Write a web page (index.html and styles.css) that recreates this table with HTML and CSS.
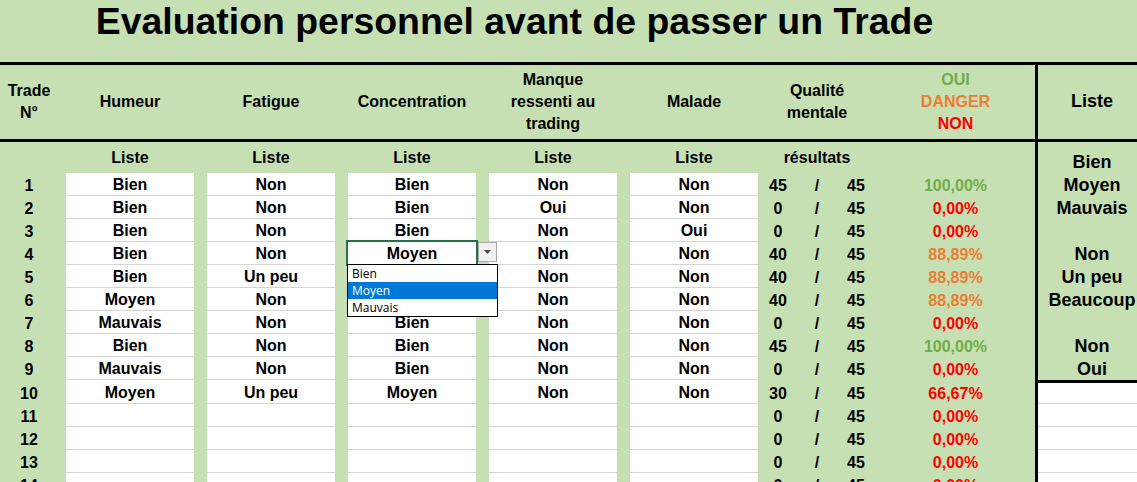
FILE: index.html
```html
<!DOCTYPE html>
<html lang="fr">
<head>
<meta charset="utf-8">
<title>Evaluation personnel avant de passer un Trade</title>
<link rel="stylesheet" href="styles.css">
</head>
<body>
<div class="sheet">
  <div class="title-row"><h1 class="title">Evaluation personnel avant de passer un Trade</h1></div>
  <div class="hline"></div>

  <div class="row head">
    <div class="h c-no"><span>Trade<br>N°</span></div>
    <div class="inputs">
      <div class="h c-in"><span>Humeur</span></div>
      <div class="h c-in"><span>Fatigue</span></div>
      <div class="h c-in"><span>Concentration</span></div>
      <div class="h c-in"><span>Manque<br>ressenti au<br>trading</span></div>
      <div class="h c-in"><span>Malade</span></div>
    </div>
    <div class="h c-qual"><span>Qualité<br>mentale</span></div>
    <div class="h c-pct"><span><span class="g">OUI</span><br><span class="o">DANGER</span><br><span class="r">NON</span></span></div>
    <div class="vsep"></div>
    <div class="h c-list big"><span>Liste</span></div>
  </div>
  <div class="hline"></div>

  <div class="row liste">
    <div class="cell c-no"></div>
    <div class="inputs">
      <div class="cell lab">Liste</div>
      <div class="cell lab">Liste</div>
      <div class="cell lab">Liste</div>
      <div class="cell lab">Liste</div>
      <div class="cell lab">Liste</div>
    </div>
    <div class="cell c-qual">résultats</div>
    <div class="cell c-pct"></div>
    <div class="vsep"></div>
    <div class="cell c-list big">Bien</div>
  </div>

  <div class="row drow">
    <div class="cell c-no">1</div>
    <div class="inputs">
      <div class="cell c-in">Bien</div><div class="cell c-in">Non</div><div class="cell c-in">Bien</div><div class="cell c-in">Non</div><div class="cell c-in">Non</div>
    </div>
    <div class="cell c-n1">45</div><div class="cell c-sl">/</div><div class="cell c-n2">45</div>
    <div class="cell c-pct g">100,00%</div>
    <div class="vsep"></div>
    <div class="cell c-list big">Moyen</div>
  </div>

  <div class="row drow">
    <div class="cell c-no">2</div>
    <div class="inputs">
      <div class="cell c-in">Bien</div><div class="cell c-in">Non</div><div class="cell c-in">Bien</div><div class="cell c-in">Oui</div><div class="cell c-in">Non</div>
    </div>
    <div class="cell c-n1">0</div><div class="cell c-sl">/</div><div class="cell c-n2">45</div>
    <div class="cell c-pct r">0,00%</div>
    <div class="vsep"></div>
    <div class="cell c-list big">Mauvais</div>
  </div>

  <div class="row drow">
    <div class="cell c-no">3</div>
    <div class="inputs">
      <div class="cell c-in">Bien</div><div class="cell c-in">Non</div><div class="cell c-in">Bien</div><div class="cell c-in">Non</div><div class="cell c-in">Oui</div>
    </div>
    <div class="cell c-n1">0</div><div class="cell c-sl">/</div><div class="cell c-n2">45</div>
    <div class="cell c-pct r">0,00%</div>
    <div class="vsep"></div>
    <div class="cell c-list big"></div>
  </div>

  <div class="row drow">
    <div class="cell c-no">4</div>
    <div class="inputs">
      <div class="cell c-in">Bien</div><div class="cell c-in">Non</div>
      <div class="cell c-in active">Moyen
        <div class="sel"></div>
        <div class="dd-btn"><svg width="7" height="4" viewBox="0 0 7 4"><polygon points="0,0 7,0 3.5,4" fill="#4a4a4a"/></svg></div>
        <div class="dd-list">
          <div class="dd-item">Bien</div>
          <div class="dd-item hl">Moyen</div>
          <div class="dd-item">Mauvais</div>
        </div>
      </div>
      <div class="cell c-in">Non</div><div class="cell c-in">Non</div>
    </div>
    <div class="cell c-n1">40</div><div class="cell c-sl">/</div><div class="cell c-n2">45</div>
    <div class="cell c-pct o">88,89%</div>
    <div class="vsep"></div>
    <div class="cell c-list big">Non</div>
  </div>

  <div class="row drow">
    <div class="cell c-no">5</div>
    <div class="inputs">
      <div class="cell c-in">Bien</div><div class="cell c-in">Un peu</div><div class="cell c-in">Bien</div><div class="cell c-in">Non</div><div class="cell c-in">Non</div>
    </div>
    <div class="cell c-n1">40</div><div class="cell c-sl">/</div><div class="cell c-n2">45</div>
    <div class="cell c-pct o">88,89%</div>
    <div class="vsep"></div>
    <div class="cell c-list big">Un peu</div>
  </div>

  <div class="row drow">
    <div class="cell c-no">6</div>
    <div class="inputs">
      <div class="cell c-in">Moyen</div><div class="cell c-in">Non</div><div class="cell c-in">Bien</div><div class="cell c-in">Non</div><div class="cell c-in">Non</div>
    </div>
    <div class="cell c-n1">40</div><div class="cell c-sl">/</div><div class="cell c-n2">45</div>
    <div class="cell c-pct o">88,89%</div>
    <div class="vsep"></div>
    <div class="cell c-list big">Beaucoup</div>
  </div>

  <div class="row drow">
    <div class="cell c-no">7</div>
    <div class="inputs">
      <div class="cell c-in">Mauvais</div><div class="cell c-in">Non</div><div class="cell c-in">Bien</div><div class="cell c-in">Non</div><div class="cell c-in">Non</div>
    </div>
    <div class="cell c-n1">0</div><div class="cell c-sl">/</div><div class="cell c-n2">45</div>
    <div class="cell c-pct r">0,00%</div>
    <div class="vsep"></div>
    <div class="cell c-list big"></div>
  </div>

  <div class="row drow">
    <div class="cell c-no">8</div>
    <div class="inputs">
      <div class="cell c-in">Bien</div><div class="cell c-in">Non</div><div class="cell c-in">Bien</div><div class="cell c-in">Non</div><div class="cell c-in">Non</div>
    </div>
    <div class="cell c-n1">45</div><div class="cell c-sl">/</div><div class="cell c-n2">45</div>
    <div class="cell c-pct g">100,00%</div>
    <div class="vsep"></div>
    <div class="cell c-list big">Non</div>
  </div>

  <div class="row drow">
    <div class="cell c-no">9</div>
    <div class="inputs">
      <div class="cell c-in">Mauvais</div><div class="cell c-in">Non</div><div class="cell c-in">Bien</div><div class="cell c-in">Non</div><div class="cell c-in">Non</div>
    </div>
    <div class="cell c-n1">0</div><div class="cell c-sl">/</div><div class="cell c-n2">45</div>
    <div class="cell c-pct r">0,00%</div>
    <div class="vsep"></div>
    <div class="cell c-list big">Oui</div>
  </div>

  <div class="row drow tall">
    <div class="cell c-no">10</div>
    <div class="inputs">
      <div class="cell c-in">Moyen</div><div class="cell c-in">Un peu</div><div class="cell c-in">Moyen</div><div class="cell c-in">Non</div><div class="cell c-in">Non</div>
    </div>
    <div class="cell c-n1">30</div><div class="cell c-sl">/</div><div class="cell c-n2">45</div>
    <div class="cell c-pct r">66,67%</div>
    <div class="vsep"></div>
    <div class="cell c-list blank first"></div>
  </div>

  <div class="row drow">
    <div class="cell c-no">11</div>
    <div class="inputs">
      <div class="cell c-in"></div><div class="cell c-in"></div><div class="cell c-in"></div><div class="cell c-in"></div><div class="cell c-in"></div>
    </div>
    <div class="cell c-n1">0</div><div class="cell c-sl">/</div><div class="cell c-n2">45</div>
    <div class="cell c-pct r">0,00%</div>
    <div class="vsep"></div>
    <div class="cell c-list blank"></div>
  </div>

  <div class="row drow">
    <div class="cell c-no">12</div>
    <div class="inputs">
      <div class="cell c-in"></div><div class="cell c-in"></div><div class="cell c-in"></div><div class="cell c-in"></div><div class="cell c-in"></div>
    </div>
    <div class="cell c-n1">0</div><div class="cell c-sl">/</div><div class="cell c-n2">45</div>
    <div class="cell c-pct r">0,00%</div>
    <div class="vsep"></div>
    <div class="cell c-list blank"></div>
  </div>

  <div class="row drow">
    <div class="cell c-no">13</div>
    <div class="inputs">
      <div class="cell c-in"></div><div class="cell c-in"></div><div class="cell c-in"></div><div class="cell c-in"></div><div class="cell c-in"></div>
    </div>
    <div class="cell c-n1">0</div><div class="cell c-sl">/</div><div class="cell c-n2">45</div>
    <div class="cell c-pct r">0,00%</div>
    <div class="vsep"></div>
    <div class="cell c-list blank"></div>
  </div>

  <div class="row drow">
    <div class="cell c-no">14</div>
    <div class="inputs">
      <div class="cell c-in"></div><div class="cell c-in"></div><div class="cell c-in"></div><div class="cell c-in"></div><div class="cell c-in"></div>
    </div>
    <div class="cell c-n1">0</div><div class="cell c-sl">/</div><div class="cell c-n2">45</div>
    <div class="cell c-pct r">0,00%</div>
    <div class="vsep"></div>
    <div class="cell c-list blank"></div>
  </div>
</div>
</body>
</html>
```

FILE: styles.css
```css
html, body {
  margin: 0;
  padding: 0;
  height: 482px;
  overflow: hidden;
  background: #C6E0B4;
}

body {
  font-family: "Liberation Sans", Arial, sans-serif;
  font-weight: bold;
  font-size: 16px;
  color: #000;
}

.sheet {
  width: 1146px;
}

.title-row {
  height: 62px;
}

.title {
  margin: 0;
  width: 1035px;
  padding-right: 6px;
  box-sizing: border-box;
  text-align: center;
  font-size: 37.4px;
  line-height: 42px;
  font-weight: bold;
  white-space: nowrap;
}

.hline {
  height: 3px;
  background: #000;
}

.row {
  display: flex;
}

.inputs {
  display: flex;
  gap: 13px;
}

.c-no { width: 58px; margin-right: 8px; }
.c-in { width: 128px; }
.lab { width: 128px; }
.c-qual { width: 118px; }
.c-n1 { width: 40px; }
.c-sl { width: 38px; }
.c-n2 { width: 40px; }
.c-pct { width: 159px; }
.c-list { width: 108px; }

.vsep {
  width: 3px;
  background: #000;
  flex: none;
}

.row > div, .inputs > div {
  flex: none;
  box-sizing: border-box;
}

/* header */
.head {
  height: 74px;
}

.h {
  display: flex;
  align-items: center;
  justify-content: center;
  text-align: center;
  line-height: 21.7px;
  font-size: 16px;
}

.h.big {
  font-size: 18px;
}

/* list label row */
.liste {
  height: 31px;
}

.cell {
  display: flex;
  align-items: flex-end;
  justify-content: center;
  line-height: 18px;
  padding-bottom: 1.5px;
  white-space: nowrap;
}

.liste .cell {
  align-items: center;
  line-height: 31px;
  padding-bottom: 0;
}

.liste .cell.c-list {
  align-items: flex-end;
  line-height: 18px;
  padding-bottom: 2px;
}

.big {
  font-size: 18px;
}

.cell.big {
  padding-bottom: 2px;
}

/* data rows */
.drow {
  height: 23px;
}

.drow.tall {
  height: 24px;
}

.drow .c-in {
  background: #fff;
  border-bottom: 1px solid #D4D4D4;
}

.c-list.blank {
  background: #fff;
  border-bottom: 1px solid #D4D4D4;
}

.c-list.first {
  border-top: 3px solid #000;
}

.g { color: #70AD47; }
.o { color: #ED7D31; }
.r { color: #FF0000; }

/* active cell with data validation dropdown */
.active {
  position: relative;
}

.sel {
  position: absolute;
  left: -2px;
  top: -2px;
  width: 132px;
  height: 26px;
  border: 2px solid #217346;
  box-sizing: border-box;
}

.dd-btn {
  position: absolute;
  left: 130px;
  top: 0;
  width: 19px;
  height: 20px;
  box-sizing: border-box;
  border: 1px solid #ABABAB;
  background: #F0F0F0;
  display: flex;
  align-items: center;
  justify-content: center;
}

.dd-list {
  position: absolute;
  left: -1px;
  top: 22px;
  width: 151px;
  height: 53px;
  box-sizing: border-box;
  border: 1px solid #000;
  background: #fff;
  z-index: 2;
  font-family: "Open Sans", "Noto Sans", sans-serif;
  font-weight: normal;
  font-size: 12px;
  line-height: 17px;
  text-align: left;
}

.dd-item {
  height: 17px;
  padding-left: 4px;
  color: #000;
}

.dd-item.hl {
  background: #0078D7;
  color: #fff;
}
```
